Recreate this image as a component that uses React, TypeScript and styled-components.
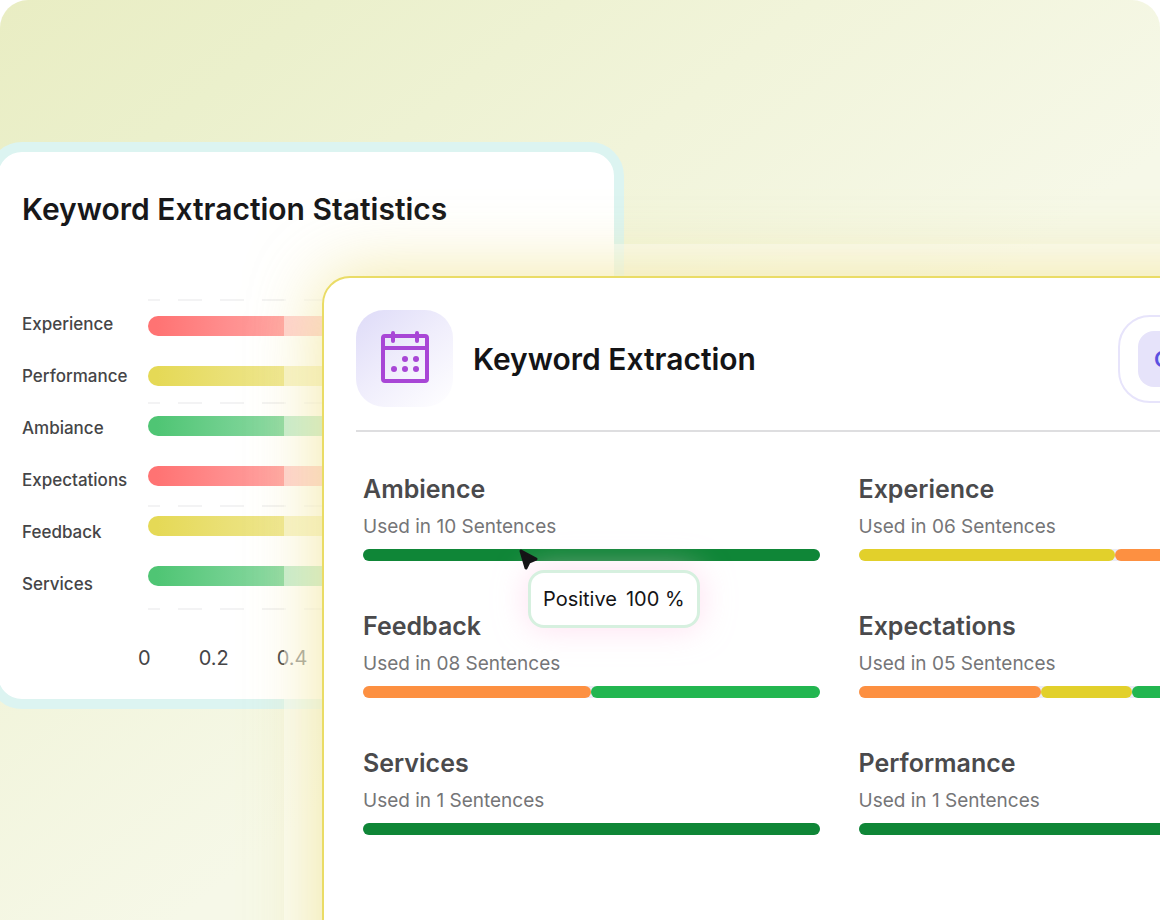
import React from "react";
import styled, { createGlobalStyle } from "styled-components";

const Global = createGlobalStyle`
  *, *::before, *::after { box-sizing: border-box; }
  body { margin: 0; background: #ffffff; }
  h1, h2, h3, p, ul, ol { margin: 0; padding: 0; font-weight: inherit; }
  body, button { font-family: Inter, "Liberation Sans", sans-serif; }
`;

const Stage = styled.main`
  display: grid;
  grid-template-columns: minmax(0, 1fr);
  align-items: start;
  min-height: 100vh;
  overflow: hidden;
  border-radius: 28px 28px 0 0;
  background: linear-gradient(142deg, #e9edc3 0%, #ebf0cc 14%, #f1f4da 35%, #f6f8e8 58%, #f6f8e8 100%);
`;

const StatsCard = styled.section`
  grid-area: 1 / 1;
  width: 636px;
  margin: 142px 0 0 -12px;
  padding: 39px 24px 27px;
  border: 10px solid #dcf4f1;
  border-radius: 34px;
  background: #ffffff;
`;

const StatsTitle = styled.h2`
  font-size: 30px;
  line-height: 36px;
  font-weight: 600;
  color: #18181a;
`;

const Chart = styled.div`
  display: grid;
  grid-template-columns: 126px 1fr;
  margin-top: 71px;
`;

const Labels = styled.ul`
  display: flex;
  flex-direction: column;
  gap: 32px;
  padding-top: 16px;
  list-style: none;
  font-size: 17px;
  line-height: 20px;
  font-weight: 500;
  color: #454547;
`;

const Plot = styled.div`
  display: grid;
  align-items: start;
`;

const Lines = styled.svg`
  grid-area: 1 / 1;
  width: 100%;
  height: 312px;
`;

const Bars = styled.div`
  grid-area: 1 / 1;
  display: flex;
  flex-direction: column;
  gap: 30px;
  padding-top: 18px;
`;

const Bar = styled.div<{ $color: string }>`
  height: 20px;
  border-radius: 10px;
  background: linear-gradient(90deg, ${(p) => p.$color} 2%, #ffffff 84%);
`;

const Axis = styled.ol`
  display: flex;
  gap: 48px;
  margin: 34px 0 0 116px;
  list-style: none;
  font-size: 20px;
  line-height: 28px;
  color: #454547;
`;

const Veil = styled.div`
  grid-area: 1 / 1;
  align-self: stretch;
  display: flex;
  margin: 244px -197px 0 284px;
  padding: 32px 0 0 38px;
  background: rgba(255, 255, 255, 0.5);
`;

const Panel = styled.section`
  flex: 1;
  margin-bottom: -120px;
  padding: 32px 32px 200px;
  border: 2px solid #eadc66;
  border-radius: 28px;
  background: #ffffff;
  box-shadow: 0 0 72px rgba(236, 221, 120, 0.7);
`;

const PanelHeader = styled.header`
  display: flex;
  align-items: center;
  gap: 20px;
  padding-bottom: 23px;
  border-bottom: 2px solid #dedee0;
`;

const IconTile = styled.div`
  display: grid;
  place-items: center;
  width: 97px;
  height: 97px;
  padding-bottom: 4px;
  border-radius: 28px;
  background: linear-gradient(140deg, #dedbf8 0%, #f0eefc 50%, #ffffff 100%);
`;

const PanelTitle = styled.h2`
  flex: 1;
  font-size: 30px;
  line-height: 36px;
  font-weight: 600;
  color: #141416;
`;

const ToggleGroup = styled.div`
  display: flex;
  width: 205px;
  height: 88px;
  padding: 14px 18px;
  border: 2px solid #e7e4fb;
  border-radius: 32px;
`;

const ToggleButton = styled.button`
  flex: 1;
  padding: 0 16px;
  border: 0;
  border-radius: 16px;
  background: #e6e3fa;
  color: #5b50e0;
  font: inherit;
  font-size: 22px;
  font-weight: 600;
  text-align: left;
`;

const Keywords = styled.div`
  display: grid;
  grid-template-columns: 1fr 1fr;
  gap: 48px 39px;
  padding: 40px 8px 0 7px;
`;

const Keyword = styled.article`
  display: flex;
  flex-direction: column;
`;

const KeywordName = styled.h3`
  font-size: 25px;
  line-height: 34px;
  font-weight: 600;
  color: #4a4a4c;
`;

const Usage = styled.p`
  margin-top: 8px;
  font-size: 19px;
  line-height: 26px;
  color: #757577;
`;

const Meter = styled.div`
  display: flex;
  height: 12px;
  margin-top: 9px;
  border-radius: 6px;
  background: #ebebf5;
`;

const Segment = styled.div<{ $share: number; $color: string }>`
  flex: ${(p) => p.$share} 0 0;
  border-radius: 6px;
  background: ${(p) => p.$color};
`;

const HoverMeter = styled.div`
  position: relative;
`;

const Pointer = styled.svg`
  position: absolute;
  left: 156px;
  top: 9px;
  z-index: 2;
`;

const Tooltip = styled.div`
  position: absolute;
  left: 165px;
  top: 30px;
  display: flex;
  gap: 9px;
  padding: 13px 12px;
  border: 3px solid #d6f0df;
  border-radius: 16px;
  background: #ffffff;
  box-shadow: 0 0 32px rgba(255, 200, 230, 0.6);
  font-size: 20px;
  line-height: 26px;
  white-space: nowrap;
  color: #141416;
`;

const RED = "#ff7373";
const YELLOW = "#e5d956";
const GREEN = "#4fc574";

const bars = [
  { label: "Experience", color: RED },
  { label: "Performance", color: YELLOW },
  { label: "Ambiance", color: GREEN },
  { label: "Expectations", color: RED },
  { label: "Feedback", color: YELLOW },
  { label: "Services", color: GREEN },
];

const DARK = "#0f8637";
const LEAF = "#22b650";
const GOLD = "#e2d02b";
const ORANGE = "#fd9041";

const keywords = [
  { name: "Ambience", count: "10", parts: [[1, DARK]], hover: true },
  { name: "Experience", count: "06", parts: [[256, GOLD], [200, ORANGE]] },
  { name: "Feedback", count: "08", parts: [[1, ORANGE], [1, LEAF]] },
  { name: "Expectations", count: "05", parts: [[2, ORANGE], [1, GOLD], [2, LEAF]] },
  { name: "Services", count: "1", parts: [[1, DARK]] },
  { name: "Performance", count: "1", parts: [[1, DARK]] },
] as { name: string; count: string; parts: [number, string][]; hover?: boolean }[];

function CalendarIcon() {
  return (
    <svg width="50" height="54" viewBox="0 0 50 54" fill="none" stroke="#a846d6" strokeWidth="4" aria-hidden="true">
      <rect x="3" y="6" width="44" height="45" rx="2" />
      <path d="M3 18H47" />
      <path d="M13 3V11M37 3V11" strokeLinecap="round" />
      <g fill="#a846d6" stroke="none">
        <circle cx="25" cy="29" r="3" />
        <circle cx="36" cy="29" r="3" />
        <circle cx="14" cy="39" r="3" />
        <circle cx="25" cy="39" r="3" />
        <circle cx="36" cy="39" r="3" />
      </g>
    </svg>
  );
}

export default function App() {
  return (
    <>
      <Global />
      <Stage>
        <StatsCard>
          <StatsTitle>Keyword Extraction Statistics</StatsTitle>
          <Chart>
            <Labels>
              {bars.map((b) => (
                <li key={b.label}>{b.label}</li>
              ))}
            </Labels>
            <Plot>
              <Lines aria-hidden="true" stroke="#f3f3f4" strokeWidth="2" strokeDasharray="24 18" strokeDashoffset="12">
                {[2, 105, 208, 311].map((y) => (
                  <line key={y} x1="0" x2="100%" y1={y} y2={y} />
                ))}
              </Lines>
              <Bars>
                {bars.map((b) => (
                  <Bar key={b.label} $color={b.color} />
                ))}
              </Bars>
            </Plot>
          </Chart>
          <Axis>
            <li>0</li>
            <li>0.2</li>
            <li>0.4</li>
          </Axis>
        </StatsCard>
        <Veil>
          <Panel>
            <PanelHeader>
              <IconTile>
                <CalendarIcon />
              </IconTile>
              <PanelTitle>Keyword Extraction</PanelTitle>
              <ToggleGroup>
                <ToggleButton type="button">Overall</ToggleButton>
              </ToggleGroup>
            </PanelHeader>
            <Keywords>
              {keywords.map((k) => (
                <Keyword key={k.name}>
                  <KeywordName>{k.name}</KeywordName>
                  <Usage>Used in {k.count} Sentences</Usage>
                  <HoverMeter>
                    <Meter>
                      {k.parts.map(([share, color], i) => (
                        <Segment key={i} $share={share} $color={color} />
                      ))}
                    </Meter>
                    {k.hover && (
                      <>
                        <Tooltip role="tooltip">
                          <span>Positive</span>
                          <span>100 %</span>
                        </Tooltip>
                        <Pointer width="20" height="22" viewBox="0 0 20 22" aria-hidden="true">
                          <path d="M2 2L17 10L10 13L7 19Z" fill="#141416" stroke="#141416" strokeWidth="3" strokeLinejoin="round" />
                        </Pointer>
                      </>
                    )}
                  </HoverMeter>
                </Keyword>
              ))}
            </Keywords>
          </Panel>
        </Veil>
      </Stage>
    </>
  );
}
